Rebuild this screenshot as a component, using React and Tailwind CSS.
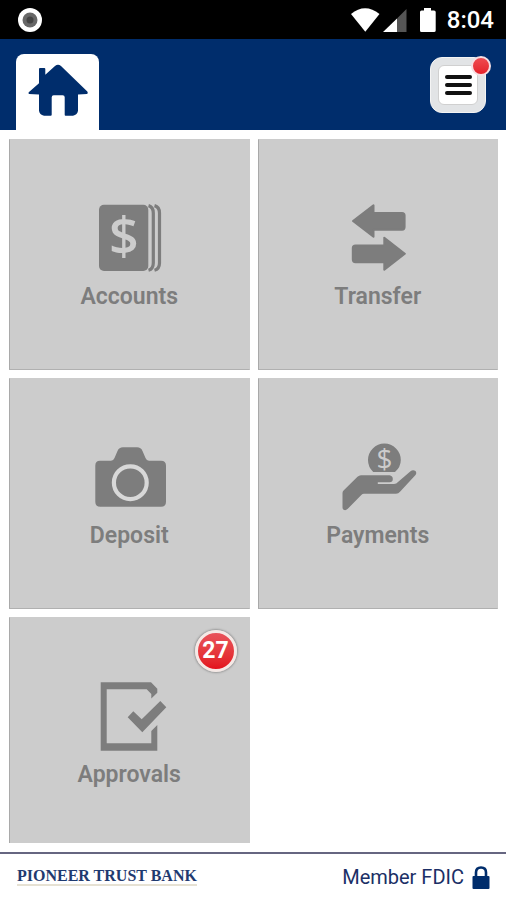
import React from 'react';

const HomeIcon = () => (
  <svg className="w-15 h-[54px]" viewBox="0 0 60 54" fill="#002d6c" aria-hidden="true">
    <path d="M27 3Q30 0.3 33 3L59.3 28.5Q60.3 30 59 31L50 31.6V47.7Q49.5 51.5 45 52.7H37.5Q36.7 52.7 36.7 51.7V34.3Q36.7 32.3 34.7 32.3H25.7Q23.7 32.3 23.7 34.3V51.7Q23.7 52.7 22.7 52.7H16Q11.5 51.5 11 47.7V31.6L1 31Q0 30 1 29L11 20.3V6Q11 5 12 5H16.3Q17.3 5 17.3 6V11.7Z" />
  </svg>
);

const AccountsIcon = () => (
  <svg className="w-20 h-[72px] overflow-visible" viewBox="0 0 80 72" aria-hidden="true">
    <rect x="10" y="2.7" width="49.3" height="66.3" rx="5" fill="#7d7d7d" />
    <g fill="none" stroke="#7d7d7d" strokeWidth="3.2">
      <path d="M59.5 3.6Q64.3 5 64.3 11V61Q64.3 67 59.5 68.2" />
      <path d="M65.5 3.6Q70.5 5 70.5 11V61Q70.5 67 65.5 68.2" />
    </g>
    <text x="34.8" y="53" textAnchor="middle" fontSize="52" fill="#cccccc" className="font-['Open_Sans',sans-serif] font-semibold">$</text>
  </svg>
);

const TransferIcon = () => (
  <svg className="w-20 h-[72px]" viewBox="0 0 80 72" fill="#7d7d7d" stroke="#7d7d7d" strokeWidth="2" strokeLinejoin="round" aria-hidden="true">
    <path d="M15 19L35.5 3.3V11H64Q66.6 11 66.6 13.5V25Q66.6 27.7 64 27.7H35.5V34.7Z" />
    <path d="M66.8 51.7L46.3 35.7V43.5H17.5Q14.8 43.5 14.8 46V57.5Q14.8 60.2 17.5 60.2H46.3V67.7Z" />
  </svg>
);

const DepositIcon = () => (
  <svg className="w-20 h-[72px]" viewBox="0 0 80 72" aria-hidden="true">
    <path fill="#7d7d7d" d="M11 19.7H22Q24.5 19.5 25.5 17L28.5 10Q30 6.3 34 6.3H48Q52 6.3 53.5 10L56.5 17Q57.5 19.5 60 19.7H72Q77 19.7 77 24.7V60.7Q77 65.7 72 65.7H11.3Q6.3 65.7 6.3 60.7V24.7Q6.3 19.7 11 19.7Z" />
    <circle cx="41.3" cy="41.7" r="16.4" fill="none" stroke="#d8d8d8" strokeWidth="4.2" />
  </svg>
);

const PaymentsIcon = () => (
  <svg className="w-20 h-[72px] overflow-visible" viewBox="0 0 80 72" aria-hidden="true">
    <path fill="#7d7d7d" d="M35.2 31Q30 26 30 19A16.4 16.4 0 0 1 62.8 19Q62.8 26 57 31Z" />
    <text x="46.4" y="28" textAnchor="middle" fontSize="28" fill="#cccccc" className="font-['Open_Sans',sans-serif]">$</text>
    <path fill="#7d7d7d" d="M4.5 52Q4.5 50.5 5.8 49.3L19.5 35.8Q21 34.2 23 34.2H51.5Q54.8 34.8 54.8 38Q54.8 41.3 51.5 41.3H39.8V43H56Q58.5 43 60 41L72.5 30.2Q75 28.2 77.5 30Q79 32 77.5 34L62 50.8Q60.5 52.8 58 52.8H26Q24.5 52.8 23.3 54L9.8 67.8Q7.5 70 5.8 68.8Q4.5 68.3 4.5 66.5Z" />
  </svg>
);

const ApprovalsIcon = () => (
  <svg className="w-20 h-[72px]" viewBox="0 0 80 72" fill="#7d7d7d" aria-hidden="true">
    <path d="M11.7 2.3H62L68.3 8.7V12.7L62.3 18.5V14L57.7 9.3H17.7V63.3H62.3V51L68.3 45V70.7H11.7Z" />
    <path d="M38.7 37.3L44.3 31.3L52.7 39.3L71.3 21L77.3 27.3L53.3 52.3Z" />
  </svg>
);

const tiles = [
  { label: 'Accounts', Icon: AccountsIcon },
  { label: 'Transfer', Icon: TransferIcon },
  { label: 'Deposit', Icon: DepositIcon },
  { label: 'Payments', Icon: PaymentsIcon },
  { label: 'Approvals', Icon: ApprovalsIcon, badge: 27 },
];

const StatusBar = () => (
  <div className="h-[39px] shrink-0 bg-black text-white flex items-center justify-between pl-[18px] pr-3">
    <svg className="w-6 h-6" viewBox="0 0 24 24" aria-hidden="true">
      <circle cx="12" cy="12" r="12" fill="#fff" />
      <circle cx="12" cy="12" r="7.5" fill="#686868" />
      <circle cx="12" cy="12" r="3.5" fill="#444" />
    </svg>
    <div className="flex items-center">
      <svg className="w-[86px] h-6" viewBox="0 0 86 24" aria-hidden="true">
        <path fill="#fff" d="M0 6Q14 -5.5 28.5 6L14.3 23.7Z" />
        <path fill="#555" d="M55.5 1V24H46V10.5Z" />
        <path fill="#fff" d="M46 10.5V24H32Z" />
        <path fill="#fff" d="M73 0H80V2.5H83Q84.7 2.5 84.7 4V22.5Q84.7 24 83 24H70.5Q69 24 69 22.5V4Q69 2.5 70.5 2.5H73Z" />
      </svg>
      <span className="ml-2.5 text-2xl leading-6 font-medium">8:04</span>
    </div>
  </div>
);

const Header = () => (
  <header className="h-[91px] shrink-0 bg-[#002d6c] flex items-end justify-between pl-4 pr-5">
    <a href="#home" aria-label="Home" className="w-[83px] h-[76px] bg-white rounded-t-lg flex justify-center pt-[9px]">
      <HomeIcon />
    </a>
    <button type="button" aria-label="Menu" className="relative w-14 h-14 mb-[17px] p-[7px] rounded-xl bg-[#e2e4e6] border border-[#f4f4f4]">
      <span className="w-full h-full rounded-md bg-white border border-[#d0d0d0] flex flex-col items-center justify-center gap-1">
        <span className="w-[27px] h-1 rounded-full bg-[#111111]" />
        <span className="w-[27px] h-1 rounded-full bg-[#111111]" />
        <span className="w-[27px] h-1 rounded-full bg-[#111111]" />
      </span>
      <span className="absolute -top-0.5 -right-1.5 w-5 h-5 rounded-full border-2 border-[#f6dfe3] bg-linear-to-b from-[#ef4a50] to-[#e5202a]" />
    </button>
  </header>
);

const Tile = ({ label, Icon, badge }) => (
  <button
    type="button"
    className="relative h-[231px] pt-[62px] flex flex-col items-center bg-[#cccccc] border border-[#cccccc] border-l-[#a9a9a9] border-b-[#b0b0b0]"
  >
    <Icon />
    <span className="mt-[9px] text-[23px] leading-7 font-semibold text-[#7d7d7d]">{label}</span>
    {badge && (
      <span className="absolute top-3 right-3 w-[42px] h-[42px] rounded-full border-[3px] border-[#f5e9e6] bg-linear-to-b from-[#e8525a] to-[#e3101c] shadow-[0_0_2px_1px_#999999] flex items-center justify-center text-[23px] leading-6 font-bold text-white">
        {badge}
      </span>
    )}
  </button>
);

const Footer = () => (
  <footer className="h-12 shrink-0 border-t-2 border-[#666681] flex items-center justify-between pl-[17px] pr-4 text-[#1b2f66]">
    <span className="border-b-2 border-[#e6e1d3] font-['Liberation_Serif',serif] text-base leading-4 font-bold text-[#1f3a70]">
      PIONEER TRUST BANK
    </span>
    <span className="flex items-center gap-2 text-xl leading-6">
      Member FDIC
      <svg className="w-[18px] h-[23px]" viewBox="0 0 18 23" aria-hidden="true">
        <path fill="none" stroke="#002d6c" strokeWidth="2.6" d="M4 11V6.5Q4 1.5 9 1.5Q14 1.5 14 6.5V11" />
        <rect x="0.5" y="10" width="17" height="13" rx="1" fill="#002d6c" />
      </svg>
    </span>
  </footer>
);

export default function App() {
  return (
    <div className="h-screen flex flex-col bg-white font-[Roboto,sans-serif]">
      <StatusBar />
      <Header />
      {/* Menu tiles scroll between the header and the footer */}
      <main className="flex-1 min-h-0 my-[9px] pl-[9px] pr-2 overflow-y-auto [scrollbar-width:none]">
        <div className="grid grid-cols-2 gap-2">
          {tiles.map((tile) => (
            <Tile key={tile.label} {...tile} />
          ))}
        </div>
      </main>
      <Footer />
    </div>
  );
}
